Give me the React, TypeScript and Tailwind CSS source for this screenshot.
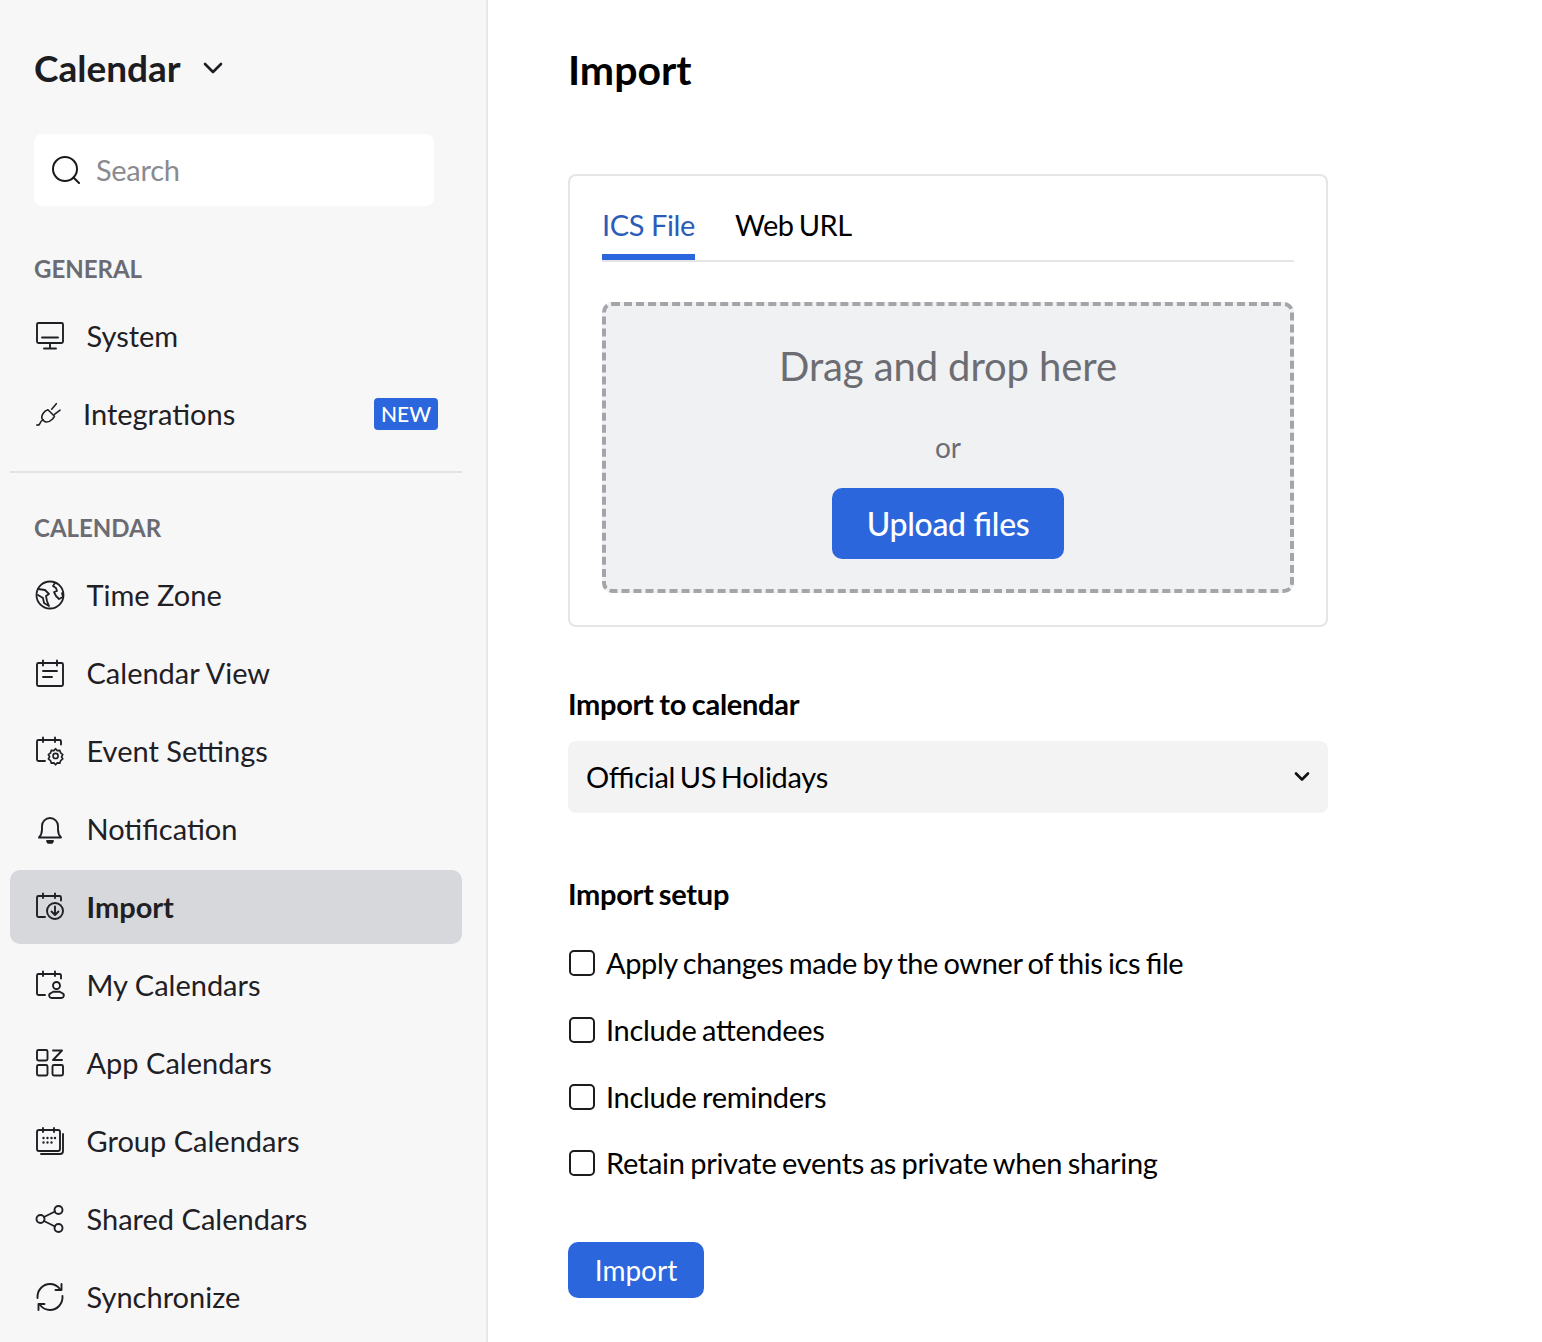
import React from "react";

const S = ({ children, className = "w-[32px] h-[32px]", sw = 1.900 }: { children: React.ReactNode; className?: string; sw?: number }) => (
  <svg viewBox="0 0 32 32" fill="none" stroke="#1f2024" strokeWidth={sw} strokeLinecap="round" strokeLinejoin="round" className={className}>
    {children}
  </svg>
);

// calendar outline with the lower right corner left open for a badge
const CalOpen = () => (
  <path d="M9 5H4.500A1.500 1.500 0 0 0 3 6.500V24.500A1.500 1.500 0 0 0 4.500 26H11M9 2.500V7M9 5h12M21 2.500V7M21 5h4.500A1.500 1.500 0 0 1 27 6.500V9.500" />
);

const icons: Record<string, React.ReactNode> = {
  system: (
    <S>
      <rect x="3" y="3" width="26" height="20" rx="1.500" />
      <path d="M8 17.500h16M16 23v5M10 28.500h12" />
    </S>
  ),
  plug: (
    <S sw={1.700}>
      <g transform="translate(0,1) scale(0.93)">
        <path d="M3 28c2 .5 3-.5 3.500-2 .6-1.800 1-3 3.500-3.500" />
        <path d="M10 23l-1.500-2c-.5-2 .5-5 3.500-8l3-1.500 7 7-2 3c-3 3-6 3.500-8 3L10 23z" />
        <path d="M19 11l5-6M22 16.500l6-4.500" />
      </g>
    </S>
  ),
  globe: (
    <S sw={1.800}>
      <circle cx="16" cy="16" r="13.500" />
      <path d="M4 10l7 1 4 4-3 2 1 5 2 5-5-3-1-5-5-3M21 4l-2 3 3 2 1 3-3 1 2 4 3 3 4-2-1-4" />
    </S>
  ),
  calView: (
    <S>
      <path d="M9 6H4.500A1.500 1.500 0 0 0 3 7.500V27.500A1.500 1.500 0 0 0 4.500 29h23A1.500 1.500 0 0 0 29 27.500V7.500A1.500 1.500 0 0 0 27.500 6H23" />
      <path d="M9 3.500v5M23 3.500v5M9 6h14M9 14h14M9 20h9" />
    </S>
  ),
  calGear: (
    <S>
      <CalOpen />
      <g transform="translate(3.300,2.200) scale(0.85)">
        <circle cx="21.500" cy="22" r="3" />
        <path d="M21.500 13.500l2 2.300 3-.3 1 3 2.500 2-1.500 2.500 1.500 2.500-2.500 2-1 3-3-.3-2 2.300-2-2.300-3 .3-1-3-2.500-2 1.500-2.500-1.500-2.500 2.500-2 1-3 3 .3z" />
      </g>
    </S>
  ),
  bell: (
    <S>
      <path d="M5 24.500h22c-2-2-3-4-3-8V13a8 8 0 0 0-16 0v3.500c0 4-1 6-3 8z" />
      <path d="M13 28h6l-1 1.800h-4z" fill="#1f2024" />
    </S>
  ),
  calDown: (
    <S>
      <CalOpen />
      <circle cx="21" cy="20" r="8" />
      <path d="M21 15.500v8.500M17.500 20.500l3.500 3.500 3.500-3.500" />
    </S>
  ),
  calUser: (
    <S>
      <CalOpen />
      <circle cx="22.500" cy="16.500" r="3.500" />
      <path d="M17.500 29a2.500 2.500 0 0 1-.8-4.800l2.500-1.500h6.600l2.500 1.500a2.500 2.500 0 0 1-.8 4.800z" />
    </S>
  ),
  apps: (
    <S>
      <rect x="3" y="3" width="10.500" height="10.500" rx="1.500" />
      <rect x="3" y="18" width="10.500" height="10.500" rx="1.500" />
      <rect x="18.500" y="18" width="10.500" height="10.500" rx="1.500" />
      <path d="M19 3.500h9L19 13h9" />
    </S>
  ),
  group: (
    <S>
      <rect x="3" y="5" width="23" height="21" rx="2" />
      <path d="M9 3v4M20 3v4M9 5h11M29 9v17a3 3 0 0 1-3 3H7" />
      <path d="M9.500 13h.01M13.500 13h.01M17.500 13h.01M21 13h.01M9.500 17.500h.01M13.500 17.500h.01M17.500 17.500h.01" strokeWidth={2.400} />
    </S>
  ),
  share: (
    <S>
      <circle cx="6.500" cy="16" r="4" />
      <circle cx="24.500" cy="7" r="4" />
      <circle cx="24.500" cy="25" r="4" />
      <path d="M10 14l11-5.500M10 18l11 5.500" />
    </S>
  ),
  sync: (
    <S>
      <path d="M3.500 17C3 9 9 3 16 3c4.500 0 7.500 2 10 5" />
      <path d="M27.500 3v6h-6" />
      <path d="M28.500 15c.5 8-5.500 14-12.500 14-4.500 0-7.500-2-10-5" />
      <path d="M4.500 29v-6h6" />
    </S>
  ),
};

const Item = ({ icon, label, active, badge, tight }: { icon: string; label: string; active?: boolean; badge?: boolean; tight?: boolean }) => (
  <div className={`flex items-center h-[74px] rounded-[10px] pl-[24px] ${badge ? "pr-0" : "pr-[24px]"} ${active ? "bg-[#d7d8dc]" : ""}`}>
    <div className="w-[32px] h-[32px] shrink-0">{icons[icon]}</div>
    <span className={`${tight ? "ml-[17px]" : "ml-[20.500px]"} text-[29px] leading-[40px] text-[#1f2024] ${active ? "font-bold" : ""}`}>{label}</span>
    {badge && (
      <span className="ml-auto mr-[24px] w-[64px] h-[32px] rounded-[4px] bg-[#2c66dd] text-white text-[21px] leading-[32px] text-center font-medium">NEW</span>
    )}
  </div>
);

const Check = ({ label, className, textClass = "tracking-[-0.3px]" }: { label: string; className: string; textClass?: string }) => (
  <label className={`flex items-center ml-[1px] ${className}`}>
    <span className="w-[26px] h-[26px] rounded-[5px] border-2 border-[#1c1c1e] bg-white shrink-0" />
    <span className={`ml-[11px] text-[29px] leading-[40px] text-black [word-spacing:-1.5px] [font-feature-settings:'liga'_1] ${textClass}`}>{label}</span>
  </label>
);

export default function App() {
  return (
    <div className="flex h-[1342px] overflow-hidden bg-white font-['Lato','Liberation_Sans',sans-serif]">
      <aside className="w-[488px] shrink-0 bg-[#f7f7f8] border-r-2 border-[#e8e8ea] pl-[10px] pr-[24px]">
        <div className="flex items-center pl-[24px] pt-[43px] h-[92px]">
          <span className="text-[37px] leading-[48px] font-bold text-[#1c1d21]">Calendar</span>
          <svg viewBox="0 0 20 20" fill="none" stroke="#1c1d21" strokeWidth={2.600} strokeLinecap="round" strokeLinejoin="round" className="w-[20px] h-[20px] ml-[22px]">
            <path d="M2 6l8 8 8-8" />
          </svg>
        </div>
        <div className="flex items-center ml-[24px] mt-[42px] w-[400px] h-[72px] rounded-[8px] bg-white pl-[18px]">
          <svg viewBox="0 0 28 28" fill="none" stroke="#17181a" strokeWidth={2} strokeLinecap="round" className="w-[28px] h-[28px]">
            <circle cx="13" cy="13" r="12" />
            <path d="M21.500 21.500L27 27" />
          </svg>
          <span className="ml-[16px] text-[29px] leading-[40px] text-[#8a8b8f] tracking-[-0.3px]">Search</span>
        </div>
        <div className="pl-[24px] mt-[46px] h-[34px] text-[24px] leading-[34px] font-bold text-[#6a6b73]">GENERAL</div>
        <div className="mt-[13px] flex flex-col gap-[4px]">
          <Item icon="system" label="System" />
          <Item icon="plug" label="Integrations" badge tight />
        </div>
        <div className="mt-[20px] h-[2px] bg-[#e3e3e6]" />
        <div className="pl-[24px] mt-[38px] h-[34px] text-[24px] leading-[34px] font-bold text-[#6a6b73]">CALENDAR</div>
        <div className="mt-[13px] flex flex-col gap-[4px]">
          <Item icon="globe" label="Time Zone" />
          <Item icon="calView" label="Calendar View" />
          <Item icon="calGear" label="Event Settings" />
          <Item icon="bell" label="Notification" />
          <Item icon="calDown" label="Import" active />
          <Item icon="calUser" label="My Calendars" />
          <Item icon="apps" label="App Calendars" />
          <Item icon="group" label="Group Calendars" />
          <Item icon="share" label="Shared Calendars" />
          <Item icon="sync" label="Synchronize" />
        </div>
      </aside>
      <main className="pl-[80px] w-[840px] shrink-0">
        <h1 className="mt-[44px] text-[41px] leading-[52px] font-bold text-black">Import</h1>
        <div className="mt-[78px] w-[760px] h-[453px] rounded-[8px] border-2 border-[#e5e5e7] px-[32px] pt-[26px]">
          <div className="flex h-[60px] border-b-2 border-[#e5e5e7]">
            <div className="h-[58px] border-b-[6px] border-[#2c66dd] text-[29px] leading-[46px] text-[#2b5cb8] tracking-[-0.4px]">ICS File</div>
            <div className="ml-[40px] text-[29px] leading-[46px] text-black tracking-[-0.4px] [word-spacing:-2px]">Web URL</div>
          </div>
          <div className="mt-[40px] h-[291px] rounded-[10px] border-4 border-dashed border-[#a4a5a9] bg-[#f0f1f3] flex flex-col items-center">
            <div className="mt-[34px] text-[40px] leading-[52px] text-[#6c6d73] tracking-[-0.1px]">Drag and drop here</div>
            <div className="mt-[37px] text-[28px] leading-[36px] text-[#6c6d73]">or</div>
            <div className="mt-[23px] w-[232px] h-[71px] rounded-[10px] bg-[#2c66dd] text-white text-[32px] leading-[71px] text-center font-medium tracking-[-0.3px] [font-feature-settings:'liga'_1]">Upload files</div>
          </div>
        </div>
        <div className="mt-[57px] text-[29px] leading-[40px] font-bold text-black tracking-[-0.3px] [word-spacing:-1px]">Import to calendar</div>
        <div className="mt-[17px] w-[760px] h-[72px] rounded-[8px] bg-[#f3f3f4] flex items-center justify-between pl-[18px] pr-[18px]">
          <span className="text-[29px] leading-[40px] text-black tracking-[-0.3px] [word-spacing:-2.500px] [font-feature-settings:'liga'_1]">Official US Holidays</span>
          <svg viewBox="0 0 16 16" fill="none" stroke="#111" strokeWidth={2.600} strokeLinecap="round" strokeLinejoin="round" className="w-[16px] h-[16px]">
            <path d="M2 4.500l6 6 6-6" />
          </svg>
        </div>
        <div className="mt-[61px] text-[29px] leading-[40px] font-bold text-black tracking-[-0.3px] [word-spacing:-1.500px]">Import setup</div>
        <Check label="Apply changes made by the owner of this ics file" className="mt-[29px]" textClass="tracking-[-0.4px]" />
        <Check label="Include attendees" className="mt-[27px]" />
        <Check label="Include reminders" className="mt-[27px]" />
        <Check label="Retain private events as private when sharing" className="mt-[26px]" />
        <div className="mt-[59px] w-[136px] h-[56px] rounded-[10px] bg-[#2c66dd] text-white text-[28px] leading-[56px] text-center">Import</div>
      </main>
    </div>
  );
}
